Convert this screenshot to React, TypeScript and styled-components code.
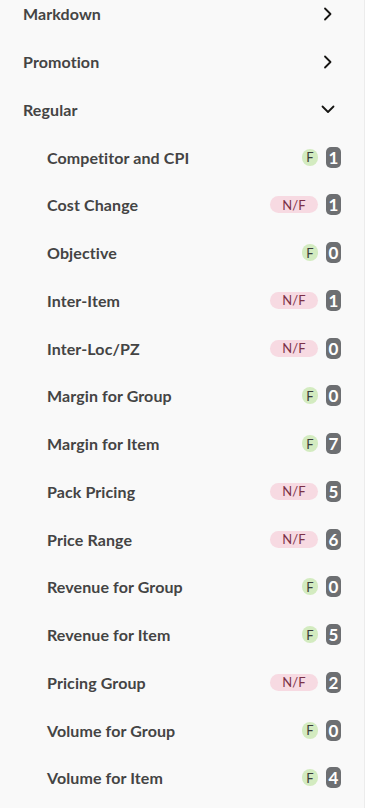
import styled, { createGlobalStyle } from "styled-components";

const GlobalStyle = createGlobalStyle`
  html, body {
    margin: 0;
    padding: 0;
    background: #ffffff;
    overflow: hidden;
  }
  body {
    font-family: Lato, "Open Sans", "Liberation Sans", sans-serif;
  }
`;

type Status = "F" | "N/F";

interface Strategy {
  name: string;
  status: Status;
  count: number;
}

const strategies: Strategy[] = [
  { name: "Competitor and CPI", status: "F", count: 1 },
  { name: "Cost Change", status: "N/F", count: 1 },
  { name: "Objective", status: "F", count: 0 },
  { name: "Inter-Item", status: "N/F", count: 1 },
  { name: "Inter-Loc/PZ", status: "N/F", count: 0 },
  { name: "Margin for Group", status: "F", count: 0 },
  { name: "Margin for Item", status: "F", count: 7 },
  { name: "Pack Pricing", status: "N/F", count: 5 },
  { name: "Price Range", status: "N/F", count: 6 },
  { name: "Revenue for Group", status: "F", count: 0 },
  { name: "Revenue for Item", status: "F", count: 5 },
  { name: "Pricing Group", status: "N/F", count: 2 },
  { name: "Volume for Group", status: "F", count: 0 },
  { name: "Volume for Item", status: "F", count: 4 },
];

const Panel = styled.nav`
  width: 364px;
  height: 808px;
  background: #f9f9f9;
  border-right: 1px solid #ececec;
  overflow: hidden;
`;

const List = styled.ul`
  list-style: none;
  margin: -10px 0 0 0;
  padding: 0;
`;

const Row = styled.li<{ $indent?: boolean }>`
  display: flex;
  align-items: center;
  height: 47.75px;
  padding: 0 23px 0 ${(p) => (p.$indent ? "47px" : "23px")};
  font-size: 16px;
  font-weight: 700;
  color: #444444;
  letter-spacing: 0.1px;
`;

const Label = styled.span`
  flex: 1;
`;

const Toggle = styled.span`
  display: flex;
  align-items: center;
  justify-content: center;
  width: 24px;
  height: 24px;
  margin-right: 1px;
`;

const Badges = styled.span`
  display: flex;
  align-items: center;
  gap: 8px;
`;

const StatusPill = styled.span<{ $fit: boolean }>`
  display: inline-flex;
  align-items: center;
  justify-content: center;
  height: 17px;
  min-width: ${(p) => (p.$fit ? "16px" : "48px")};
  padding: 0 ${(p) => (p.$fit ? "0" : "4px")};
  box-sizing: border-box;
  border-radius: 9px;
  font-size: 13px;
  font-weight: 400;
  background: ${(p) => (p.$fit ? "#d3ebc0" : "#f7dae2")};
  color: ${(p) => (p.$fit ? "#3b3b3b" : "#7b3148")};
`;

const Count = styled.span`
  display: inline-flex;
  align-items: center;
  justify-content: center;
  width: 15px;
  height: 21px;
  border-radius: 5px;
  background: #6d6f72;
  color: #ffffff;
  font-size: 17px;
  font-weight: 700;
`;

const Chevron = ({ open }: { open?: boolean }) => (
  <svg width="14" height="14" viewBox="0 0 14 14" fill="none">
    <path
      d={open ? "M1.5 4.5 L7 10 L12.5 4.5" : "M4 1.5 L9.5 7 L4 12.5"}
      stroke="#161513"
      strokeWidth="1.8"
      strokeLinecap="round"
      strokeLinejoin="round"
    />
  </svg>
);

export default function App() {
  return (
    <>
      <GlobalStyle />
      <Panel>
        <List>
          <Row>
            <Label>Markdown</Label>
            <Toggle>
              <Chevron />
            </Toggle>
          </Row>
          <Row>
            <Label>Promotion</Label>
            <Toggle>
              <Chevron />
            </Toggle>
          </Row>
          <Row>
            <Label>Regular</Label>
            <Toggle>
              <Chevron open />
            </Toggle>
          </Row>
          {strategies.map((s) => (
            <Row $indent key={s.name}>
              <Label>{s.name}</Label>
              <Badges>
                <StatusPill $fit={s.status === "F"}>{s.status}</StatusPill>
                <Count>{s.count}</Count>
              </Badges>
            </Row>
          ))}
        </List>
      </Panel>
    </>
  );
}
